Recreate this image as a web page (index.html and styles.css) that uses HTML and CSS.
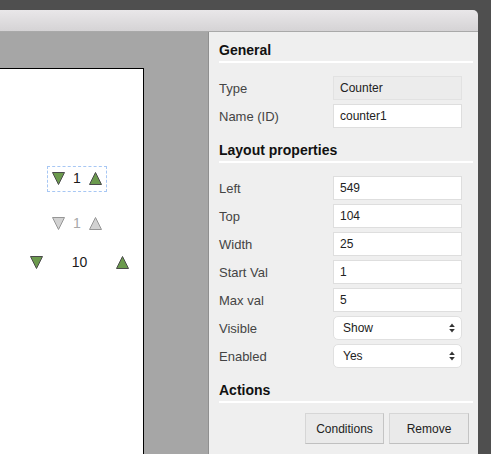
FILE: index.html
```html
<!DOCTYPE html>
<html>
<head>
<meta charset="utf-8">
<link rel="stylesheet" href="styles.css">
</head>
<body>
<div class="window">
  <div class="titlebar"></div>
  <div class="content">
    <div class="canvas">
      <div class="page">
        <div class="counter selected">
          <svg class="tri" width="13" height="13" viewBox="0 0 13 13"><polygon points="0.5,0.5 12.5,0.5 6.5,12.5" class="g"/></svg>
          <span class="val">1</span>
          <svg class="tri" width="13" height="13" viewBox="0 0 13 13"><polygon points="6.5,0.5 12.5,12.5 0.5,12.5" class="g"/></svg>
        </div>
        <div class="counter disabled">
          <svg class="tri" width="13" height="13" viewBox="0 0 13 13"><polygon points="0.5,0.5 12.5,0.5 6.5,12.5" class="d"/></svg>
          <span class="val">1</span>
          <svg class="tri" width="13" height="13" viewBox="0 0 13 13"><polygon points="6.5,0.5 12.5,12.5 0.5,12.5" class="d"/></svg>
        </div>
        <div class="counter wide">
          <svg class="tri" width="13" height="13" viewBox="0 0 13 13"><polygon points="0.5,0.5 12.5,0.5 6.5,12.5" class="g"/></svg>
          <span class="val">10</span>
          <svg class="tri" width="13" height="13" viewBox="0 0 13 13"><polygon points="6.5,0.5 12.5,12.5 0.5,12.5" class="g"/></svg>
        </div>
      </div>
    </div>
    <div class="sidebar">
      <div class="section-title first">General</div>
      <div class="props">
        <label>Type</label><div class="input readonly">Counter</div>
        <label>Name (ID)</label><div class="input">counter1</div>
      </div>
      <div class="section-title">Layout properties</div>
      <div class="props">
        <label>Left</label><div class="input">549</div>
        <label>Top</label><div class="input">104</div>
        <label>Width</label><div class="input">25</div>
        <label>Start Val</label><div class="input">1</div>
        <label>Max val</label><div class="input">5</div>
        <label>Visible</label><div class="select"><span>Show</span><svg width="6" height="10" viewBox="0 0 6 10"><polygon points="3,0.5 5.8,4 0.2,4" /><polygon points="0.2,6 5.8,6 3,9.5"/></svg></div>
        <label>Enabled</label><div class="select"><span>Yes</span><svg width="6" height="10" viewBox="0 0 6 10"><polygon points="3,0.5 5.8,4 0.2,4" /><polygon points="0.2,6 5.8,6 3,9.5"/></svg></div>
      </div>
      <div class="section-title actions">Actions</div>
      <div class="buttons">
        <button class="btn btn-cond">Conditions</button>
        <button class="btn btn-remove">Remove</button>
      </div>
    </div>
  </div>
</div>
</body>
</html>
```
FILE: styles.css
```css
html, body {
  margin: 0;
  padding: 0;
  height: 100%;
  overflow: hidden;
}
body {
  background: #4f4f4f;
  font-family: "Liberation Sans", Arial, sans-serif;
}
.window {
  margin-top: 10px;
  width: 478px;
  height: 444px;
  display: flex;
  flex-direction: column;
  border-top-right-radius: 5px;
  overflow: hidden;
}
.titlebar {
  height: 21px;
  background: linear-gradient(#e9e7e9, #d5d3d5);
  border-bottom: 1px solid #a9a9a9;
  flex: none;
}
.content {
  flex: 1;
  display: flex;
}
.canvas {
  width: 208px;
  background: #a6a6a6;
  border-right: 1px solid #8f8f8f;
  padding-top: 36px;
  display: flex;
  flex-direction: column;
}
.page {
  position: relative;
  width: 143px;
  flex: 1;
  background: #fff;
  border-top: 1px solid #000;
  border-right: 1px solid #000;
}
.counter {
  position: absolute;
  display: flex;
  align-items: center;
  justify-content: space-between;
  height: 13px;
}
.counter .tri { display: block; }
.counter .val {
  font-size: 14px;
  line-height: 13px;
  color: #1a1a1a;
}
.g { fill: #6b9a4d; stroke: #4a4a4a; stroke-width: 1; }
.d { fill: #d2d2d2; stroke: #969696; stroke-width: 1; }
.counter.selected {
  left: 47px;
  top: 97px;
  width: 50px;
  padding: 5px 4px 6px;
  border: 1px dashed #a7c7f4;
}
.counter.disabled {
  left: 52px;
  top: 148px;
  width: 50px;
}
.counter.disabled .val { color: #a8a8a8; }
.counter.wide {
  left: 30px;
  top: 187px;
  width: 99px;
}
.sidebar {
  flex: 1;
  background: #efefef;
  padding: 0 5px 0 10px;
  color: #333;
}
.section-title {
  font-weight: bold;
  font-size: 14px;
  line-height: 20px;
  color: #111;
  padding-bottom: 1px;
  border-bottom: 2px solid #fff;
  margin-top: 12px;
  margin-bottom: 13px;
}
.section-title.first {
  margin-top: 8px;
  margin-bottom: 13px;
}
.section-title.actions {
  margin-top: 12px;
  margin-bottom: 10px;
}
.props {
  display: grid;
  grid-template-columns: 114px 129px;
  grid-auto-rows: 24px;
  row-gap: 4px;
  align-items: center;
}
.props label {
  font-size: 13px;
  color: #444;
}
.input {
  box-sizing: border-box;
  height: 24px;
  background: #fff;
  border: 1px solid #dedede;
  font-size: 12px;
  line-height: 22px;
  padding-left: 6px;
  color: #222;
}
.input.readonly {
  background: #ececec;
  border-color: #e2e2e2;
}
.select {
  box-sizing: border-box;
  height: 24px;
  background: #fff;
  border: 1px solid #e0e0e0;
  border-radius: 5px;
  font-size: 12px;
  display: flex;
  align-items: center;
  justify-content: space-between;
  padding: 0 6px 0 9px;
  color: #222;
}
.select svg { fill: #333; }
.buttons {
  display: flex;
  justify-content: flex-end;
  gap: 5px;
  padding-right: 4px;
}
.btn {
  font-family: "Liberation Sans", Arial, sans-serif;
  font-size: 12px;
  color: #222;
  height: 31px;
  background: #eaeaea;
  border: 1px solid #d6d6d6;
  border-right-color: #c4c4c4;
  border-bottom-color: #c0c0c0;
  padding: 0;
}
.btn-cond { width: 79px; }
.btn-remove { width: 80px; }
```
